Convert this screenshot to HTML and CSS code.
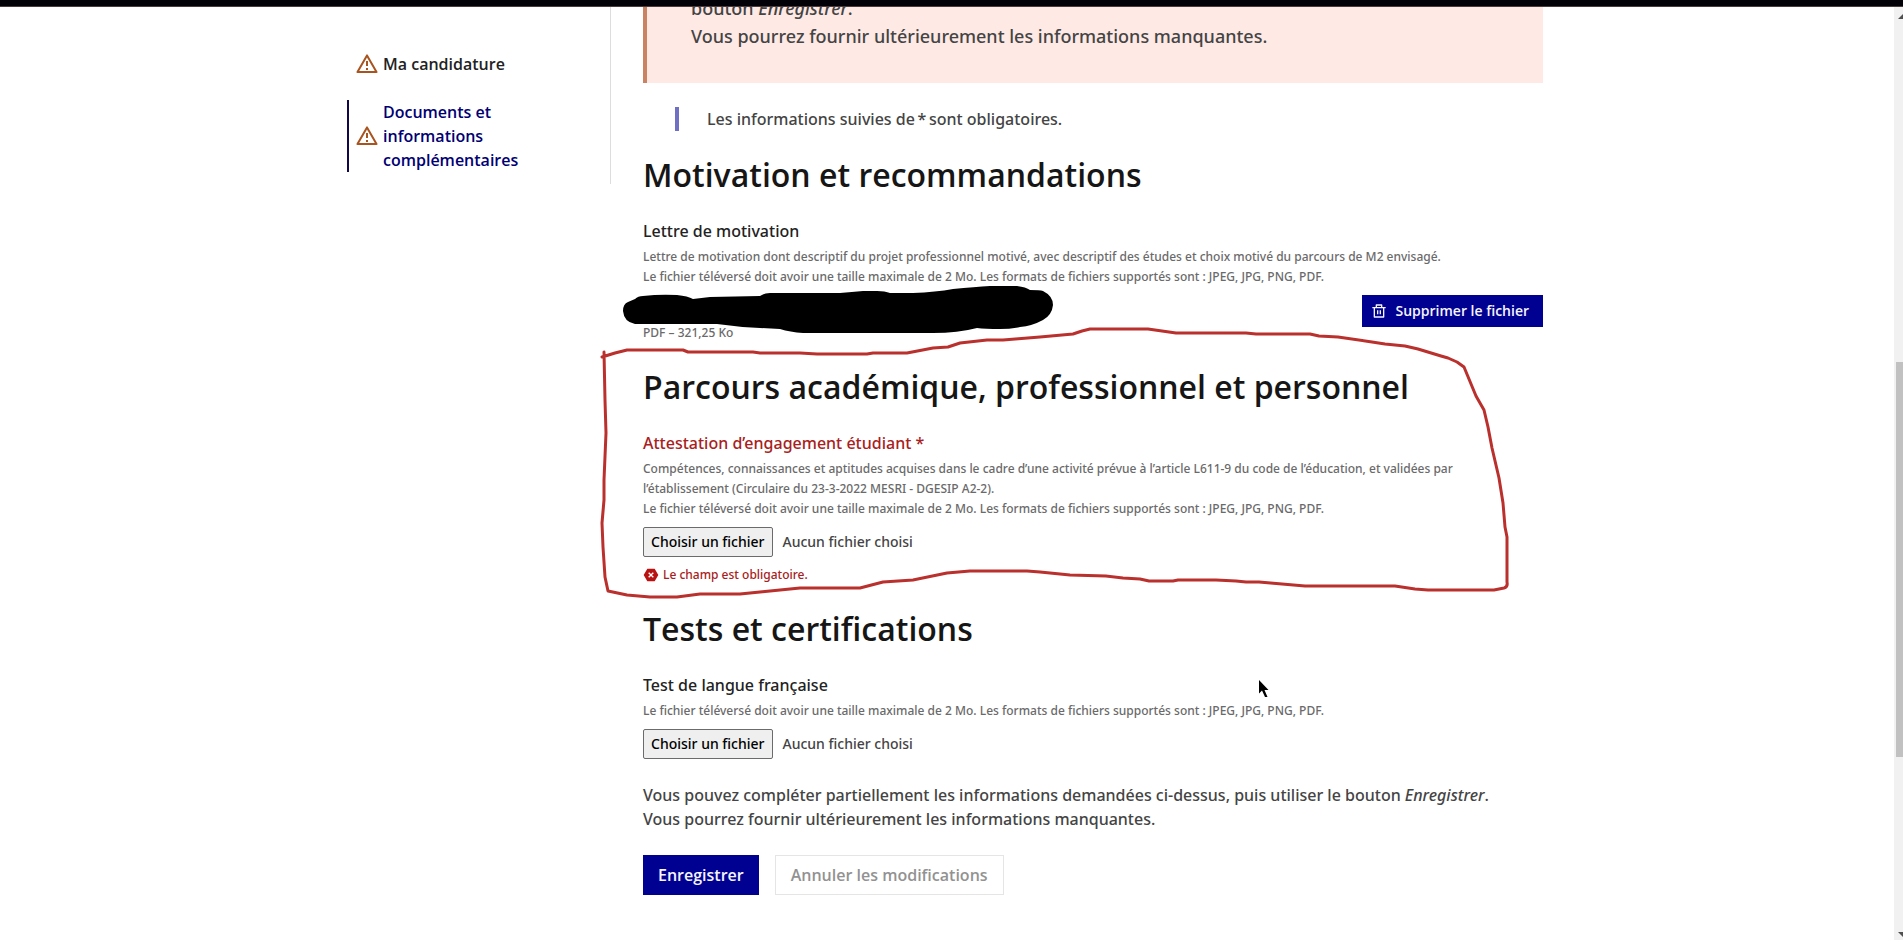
FILE: index.html
```html
<!DOCTYPE html>
<html lang="fr">
<head>
    <meta charset="UTF-8">
    <meta name="viewport" content="width=device-width, initial-scale=1.0">
    <title>Documents et informations complémentaires</title>
    <link rel="stylesheet" href="styles.css">
</head>
<body>
    <div class="top-strip"></div>

    <div class="page">
        <div class="page-body">
            <div class="container">
                <nav class="sidemenu" aria-label="Ma candidature">
                    <a class="sidemenu-link" href="#candidature">
                        <svg class="icon-warning" viewBox="0 0 24 24" aria-hidden="true"><path d="M12.866 3l9.526 16.5a1 1 0 0 1-.866 1.5H2.474a1 1 0 0 1-.866-1.5L11.134 3a1 1 0 0 1 1.732 0zm-8.66 16h15.588L12 5.5 4.206 19zM11 16h2v2h-2v-2zm0-7h2v5h-2V9z"/></svg>
                        <span>Ma candidature</span>
                    </a>
                    <a class="sidemenu-link active" href="#documents" aria-current="page">
                        <svg class="icon-warning" viewBox="0 0 24 24" aria-hidden="true"><path d="M12.866 3l9.526 16.5a1 1 0 0 1-.866 1.5H2.474a1 1 0 0 1-.866-1.5L11.134 3a1 1 0 0 1 1.732 0zm-8.66 16h15.588L12 5.5 4.206 19zM11 16h2v2h-2v-2zm0-7h2v5h-2V9z"/></svg>
                        <span>Documents et informations complémentaires</span>
                    </a>
                </nav>

                <main class="content">
                    <div class="callout">
                        <p>bouton <em>Enregistrer</em>.<br>Vous pourrez fournir ultérieurement les informations manquantes.</p>
                    </div>

                    <p class="highlight">Les informations suivies de&#8239;*&#8239;sont obligatoires.</p>

                    <form>
                        <section class="group">
                            <h2>Motivation et recommandations</h2>
                            <h3 class="label">Lettre de motivation</h3>
                            <p class="hint">Lettre de motivation dont descriptif du projet professionnel motivé, avec descriptif des études et choix motivé du parcours de M2 envisagé.<br>Le fichier téléversé doit avoir une taille maximale de 2 Mo. Les formats de fichiers supportés sont : JPEG, JPG, PNG, PDF.</p>
                            <div class="uploaded">
                                <span class="file-detail">PDF – 321,25 Ko</span>
                                <button class="btn btn-small" type="button">
                                    <svg class="icon-small" viewBox="0 0 24 24" aria-hidden="true"><path d="M17 6h5v2h-2v13a1 1 0 0 1-1 1H5a1 1 0 0 1-1-1V8H2V6h5V3a1 1 0 0 1 1-1h8a1 1 0 0 1 1 1v3zm1 2H6v12h12V8zm-9 3h2v6H9v-6zm4 0h2v6h-2v-6zM9 4v2h6V4H9z"/></svg>
                                    Supprimer le fichier
                                </button>
                                <svg class="redaction" viewBox="620 284 436 52" aria-hidden="true"><path d="M623 311Q623 304 628 302L635 299Q638 296 643 296Q660 294 677 295Q688 296 693 299L710 297L760 296Q764 293 770 293H840Q852 292 863 291H877Q885 291 890 293H913Q936 292 953 289Q975 287 990 286H1017Q1026 287 1030 290Q1040 290 1043 291Q1053 296 1053 305Q1052 315 1043 320Q1032 326 1020 327Q1010 329 1000 329Q985 329 977 328Q958 333 933 333H803Q790 332 780 329L760 328Q738 327 717 324H635Q624 322 623 311Z"/></svg>
                            </div>
                        </section>

                        <section class="group">
                            <h2>Parcours académique, professionnel et personnel</h2>
                            <label class="label label-error" for="attestation">Attestation d’engagement étudiant *</label>
                            <p class="hint">Compétences, connaissances et aptitudes acquises dans le cadre d’une activité prévue à l’article L611-9 du code de l’éducation, et validées par l’établissement (Circulaire du 23-3-2022 MESRI - DGESIP A2-2).<br>Le fichier téléversé doit avoir une taille maximale de 2 Mo. Les formats de fichiers supportés sont : JPEG, JPG, PNG, PDF.</p>
                            <div class="upload">
                                <input class="upload-input" type="file" id="attestation" required>
                                <span class="upload-btn">Choisir un fichier</span>
                                <span class="upload-name">Aucun fichier choisi</span>
                            </div>
                            <p class="error">
                                <svg class="icon-small" viewBox="0 0 24 24" aria-hidden="true"><path d="M17.5 2.5L23 12l-5.5 9.5h-11L1 12l5.5-9.5h11zM12 10.600L9.200 7.800 7.800 9.200 10.600 12l-2.800 2.800 1.400 1.400L12 13.400l2.800 2.800 1.400-1.400L13.400 12l2.800-2.800-1.400-1.400L12 10.600z"/></svg>
                                Le champ est obligatoire.
                            </p>
                            <svg class="outline" viewBox="600 325 920 275" aria-hidden="true"><path d="M602 357L615 353L627 350H683L688 352H753L760 353H800L817 354H867L873 353H907L933 348L948 347L960 343L987 340H1003L1040 337L1073 334L1082 331L1090 329H1148L1176 333H1246L1256 334H1310L1319 336L1338 337L1372 342L1385 344L1405 346L1418 349L1441 356L1448 358L1457 362L1464 367L1476 396L1484 410L1488 427L1492 448L1499 478L1503 503L1505 527L1507 537V582Q1508 587 1504 588L1494 590H1428L1415 589L1395 586H1305L1282 584L1259 582H1246L1236 581L1216 580H1178L1173 581H1149L1140 579L1123 578L1106 576L1070 575L1040 572L1027 571H970L947 573L913 580L883 582L860 588H800L740 594H700L677 597H650L627 595L608 591L605 577L603 547L602 523L604 500V480L606 433L605 400L604 352"/></svg>
                        </section>

                        <section class="group">
                            <h2>Tests et certifications</h2>
                            <label class="label" for="test-langue">Test de langue française</label>
                            <p class="hint">Le fichier téléversé doit avoir une taille maximale de 2 Mo. Les formats de fichiers supportés sont : JPEG, JPG, PNG, PDF.</p>
                            <div class="upload">
                                <input class="upload-input" type="file" id="test-langue">
                                <span class="upload-btn">Choisir un fichier</span>
                                <span class="upload-name">Aucun fichier choisi</span>
                            </div>
                            <svg class="cursor" viewBox="0 0 10 18" aria-hidden="true"><path d="M0 0V13.500L3 10.500 6 17H8.500L5.500 10H9.500z"/></svg>
                        </section>

                        <p class="note">Vous pouvez compléter partiellement les informations demandées ci-dessus, puis utiliser le bouton <em>Enregistrer</em>.<br>Vous pourrez fournir ultérieurement les informations manquantes.</p>

                        <div class="actions">
                            <button class="btn" type="submit">Enregistrer</button>
                            <button class="btn btn-secondary" type="reset" disabled>Annuler les modifications</button>
                        </div>
                    </form>
                </main>
            </div>
        </div>

        <div class="scrollbar" aria-hidden="true">
            <svg class="scroll-arrow" viewBox="0 0 9 17"><path d="M4 12L9 7V12z"/></svg>
            <div class="scroll-track">
                <div class="scroll-thumb"></div>
            </div>
            <svg class="scroll-arrow" viewBox="0 0 9 17"><path d="M4 9H9V14z"/></svg>
        </div>
    </div>
</body>
</html>
```
FILE: styles.css
```css
* {
    box-sizing: border-box;
}

body {
    display: flex;
    flex-direction: column;
    min-height: 100vh;
    margin: 0;
    background-color: #fff;
    color: #444;
    font-family: "Noto Sans", Arial, sans-serif;
    font-size: 16px;
    font-weight: 500;
    line-height: 24px;
}

h2, h3, p {
    margin: 0;
}

.top-strip {
    height: 7px;
    border-bottom: 1px solid #4a3c3c;
    background-color: #020108;
}

.page {
    display: flex;
    flex: 1;
    overflow: hidden;
}

.page-body {
    flex: 1;
    padding-right: 4px;
}

.container {
    display: flex;
    align-items: flex-start;
    max-width: 1196px;
    margin: 0 auto;
}

/* Side menu */
.sidemenu {
    display: flex;
    flex-direction: column;
    gap: 24px;
    width: 264px;
    padding: 45px 48px 12px 0;
    border-right: 1px solid #ddd;
}

.sidemenu-link {
    display: flex;
    align-items: center;
    gap: 4px;
    padding-left: 6px;
    border-left: 2px solid transparent;
    color: #222;
    font-family: "Open Sans", Arial, sans-serif;
    font-weight: 600;
    text-decoration: none;
}

.sidemenu-link.active {
    border-left-color: #10084a;
    color: #000074;
}

.icon-warning {
    flex: none;
    width: 24px;
    height: 24px;
    fill: #a85420;
}

/* Content */
.content {
    flex: 1;
    margin-left: 32px;
}

.callout {
    margin-top: -13px;
    padding: 0 44px 33px;
    border-left: 4px solid #c98262;
    background-color: #fee9e5;
    font-size: 18px;
    line-height: 28px;
}

.highlight {
    margin: 24px 32px;
    padding-left: 28px;
    border-left: 4px solid #6f6fc4;
}

.group {
    position: relative;
    margin: 24px 0;
}

h2 {
    margin-bottom: 24px;
    color: #161616;
    font-family: "Open Sans", Arial, sans-serif;
    font-size: 32px;
    font-weight: 600;
    line-height: 40px;
}

.label {
    display: block;
    color: #222;
    font-size: 16px;
    font-weight: 500;
    line-height: 24px;
}

.label-error {
    color: #a82020;
}

.hint {
    margin: 4px 0 8px;
    padding-right: 32px;
    color: #6a6a6a;
    font-size: 12px;
    line-height: 20px;
}

.uploaded {
    position: relative;
    display: flex;
    align-items: flex-start;
    justify-content: space-between;
    height: 48px;
}

.file-detail {
    align-self: flex-end;
    color: #6a6a6a;
    font-size: 12px;
    line-height: 20px;
}

.redaction {
    position: absolute;
    top: -11px;
    left: -23px;
    width: 436px;
    height: 52px;
}

.upload {
    position: relative;
    display: flex;
    align-items: center;
    gap: 10px;
    width: fit-content;
    font-size: 14px;
}

/* the native field lies over its own label texts */
.upload-input {
    position: absolute;
    inset: 0;
    width: 100%;
    opacity: 0;
    cursor: pointer;
}

.upload-btn {
    padding: 2px 7px;
    border: 1px solid #6b6b6b;
    border-radius: 2px;
    background-color: #efefef;
    color: #000;
    line-height: 24px;
}

.error {
    display: flex;
    align-items: center;
    gap: 4px;
    margin-top: 8px;
    color: #a82020;
    font-size: 12px;
    line-height: 20px;
}

.icon-small {
    width: 16px;
    height: 16px;
    fill: currentColor;
}

.error .icon-small {
    fill: #b81212;
}

.outline {
    position: absolute;
    top: -42px;
    left: -43px;
    width: 920px;
    height: 275px;
    fill: none;
    stroke: #b9302d;
    stroke-width: 3px;
    stroke-linejoin: round;
    stroke-linecap: round;
    pointer-events: none;
}

.cursor {
    position: absolute;
    top: 71px;
    left: 616px;
    width: 10px;
    height: 18px;
}

.note {
    margin-bottom: 24px;
}

/* Buttons */
.actions {
    display: flex;
    gap: 16px;
}

.btn {
    padding: 8px 15px;
    border: none;
    background-color: #000091;
    color: #f5f5fe;
    font-family: "Open Sans", Arial, sans-serif;
    font-size: 16px;
    font-weight: 600;
    line-height: 24px;
    cursor: pointer;
}

.btn-small {
    display: flex;
    align-items: center;
    gap: 8px;
    padding: 4px 14px 4px 9px;
    font-size: 14px;
}

.btn-secondary {
    padding: 7px 15px;
    border: 1px solid #e5e5e5;
    background-color: transparent;
    color: #929292;
    cursor: not-allowed;
}

/* Scrollbar */
.scrollbar {
    display: flex;
    flex-direction: column;
    width: 9px;
    background-color: #f1f1f1;
}

.scroll-arrow {
    height: 17px;
    fill: #505050;
}

.scroll-track {
    display: flex;
    flex: 1;
    flex-direction: column;
    padding-left: 2px;
}

.scroll-track::before {
    content: "";
    flex: 338;
}

.scroll-track::after {
    content: "";
    flex: 166;
}

.scroll-thumb {
    flex: 396;
    background-color: #c1c1c1;
}
```
